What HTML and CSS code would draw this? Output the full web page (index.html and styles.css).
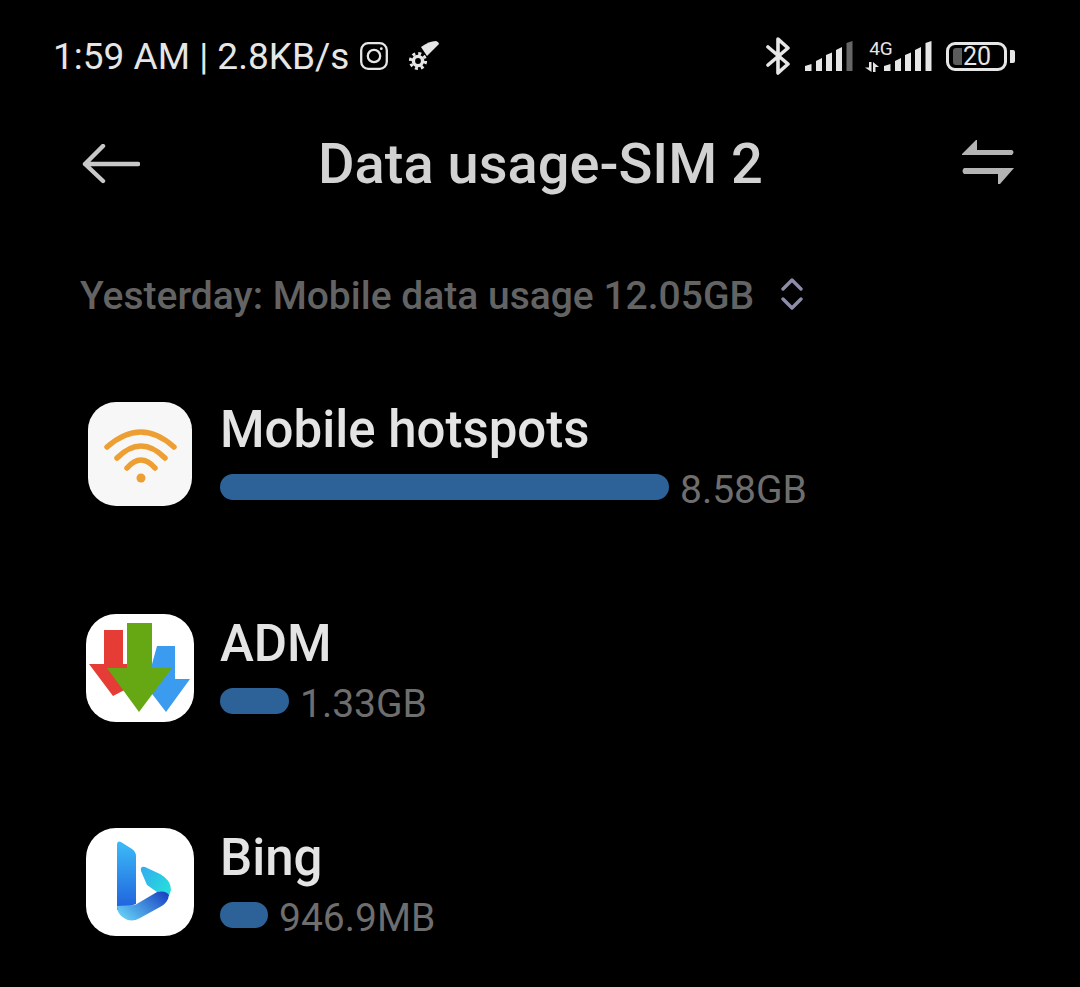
FILE: index.html
```html
<!DOCTYPE html>
<html lang="en">
<head>
  <meta charset="UTF-8">
  <title>Data usage-SIM 2</title>
  <link rel="stylesheet" href="styles.css">
</head>
<body>
  <!-- status bar -->
  <div class="status-bar">
    <div class="status-left">
      <span class="status-text">1:59 AM | 2.8KB/s</span>
      <svg class="ic-insta" viewBox="0 0 28 28" fill="none" stroke="#e6e6e6" stroke-width="2.3">
        <rect x="1.2" y="1.2" width="25.6" height="25.6" rx="7"/>
        <circle cx="14" cy="14" r="6.2"/>
        <circle cx="21.3" cy="6.7" r="1.4" fill="#e6e6e6" stroke="none"/>
      </svg>
      <svg class="ic-gear" viewBox="0 0 32 30">
        <path d="M13 6 Q21 0 28 0 Q31 1 31 3 L19 15 Z" fill="#e6e6e6"/>
        <circle cx="10" cy="20" r="4.6" fill="none" stroke="#e6e6e6" stroke-width="3.4"/>
        <circle cx="10" cy="20" r="7.6" fill="none" stroke="#e6e6e6" stroke-width="3" stroke-dasharray="3 2.97"/>
      </svg>
    </div>
    <div class="status-right">
      <svg class="ic-bt" viewBox="0 0 24 38" fill="none" stroke="#e6e6e6" stroke-width="3.6" stroke-linecap="round" stroke-linejoin="round">
        <path d="M2 10 L22 27 L12 36 V2 L22 11 L2 28"/>
      </svg>
      <svg class="ic-signal" viewBox="0 0 48 30" fill="#e6e6e6">
        <path d="M0 25 L6.500 23 V30 H0 Z"/>
        <path d="M11 20 L17 17 V30 H11 Z"/>
        <path d="M21 14 L27 11.500 V30 H21 Z"/>
        <path d="M31 9 L37 6 V30 H31 Z"/>
        <path d="M41.500 2 L47.500 0 V30 H41.500 Z" fill="#666"/>
      </svg>
      <div class="net">
        <span class="net-label">4G</span>
        <svg class="ic-arrows" viewBox="0 0 14 10" fill="#e6e6e6">
          <path d="M4 0 H6.500 V10 L0 5.500 H4 Z"/>
          <path d="M8 0 L14 5 H10.500 V10 H8 Z"/>
        </svg>
      </div>
      <svg class="ic-signal ic-signal-2" viewBox="0 0 48 30" fill="#e6e6e6">
        <path d="M0 25 L6.500 23 V30 H0 Z"/>
        <path d="M11 20 L17 17 V30 H11 Z"/>
        <path d="M21 14 L27 11.500 V30 H21 Z"/>
        <path d="M31 9 L37 6 V30 H31 Z"/>
        <path d="M41.500 2 L47.500 0 V30 H41.500 Z"/>
      </svg>
      <div class="battery">
        <span class="battery-fill"></span>
        <span class="battery-num">20</span>
      </div>
      <span class="battery-nub"></span>
    </div>
  </div>

  <!-- title bar -->
  <div class="title-bar">
    <svg class="ic-back" viewBox="0 0 58 40" fill="none" stroke="#c8c8c8" stroke-width="4.4" stroke-linecap="round" stroke-linejoin="round">
      <path d="M56 20 H3 M21 2 L3 20 L21 37"/>
    </svg>
    <h1 class="title">Data usage-SIM 2</h1>
    <svg class="ic-switch" viewBox="0 0 54 46" fill="#b4b4b4">
      <path d="M1 15 L15 1 H16 V11 H51 Q54 13 51 16 H1 Z"/>
      <path d="M3 29 H53 L39 45 H37 V35 H3 Q0 32 3 29 Z"/>
    </svg>
  </div>

  <!-- period selector -->
  <div class="period">
    <span>Yesterday: Mobile data usage 12.05GB</span>
    <svg class="ic-updown" viewBox="0 0 22 32" fill="none" stroke="#8c8ca8" stroke-width="3.4" stroke-linecap="round" stroke-linejoin="round">
      <path d="M2 11 L11 2 L20 11 M2 21 L11 30 L20 21"/>
    </svg>
  </div>

  <!-- app list -->
  <div class="app-list">
    <div class="app-row">
      <div class="app-icon">
        <svg class="icon-hotspot" viewBox="0 0 104 104" fill="none" stroke="#ee9f33" stroke-width="5.500" stroke-linecap="round">
          <path d="M19 45 Q53 15 86 45"/>
          <path d="M29 56 Q53 32 77 56"/>
          <path d="M39 66 Q53 50 67 66"/>
          <circle cx="53" cy="76" r="4.500" fill="#ee9f33" stroke="none"/>
        </svg>
      </div>
      <div class="app-info">
        <div class="app-name">Mobile hotspots</div>
        <div class="usage">
          <span class="usage-bar bar-hotspot"></span>
          <span class="usage-value">8.58GB</span>
        </div>
      </div>
    </div>

    <div class="app-row">
      <div class="app-icon">
        <svg class="icon-app" viewBox="0 0 108 108">
          <rect width="108" height="108" rx="30" fill="#fff"/>
          <path d="M18 16 H37 V50 H50 V70 L27 82 L3 50 H18 Z" fill="#e53d36"/>
          <path d="M71 32 H89 V65 H104 L80 98 L60 72 Z" fill="#3a9bef"/>
          <path d="M41 9 H66 V54 H86 L53 98 L21 54 H41 Z" fill="#66a813"/>
        </svg>
      </div>
      <div class="app-info">
        <div class="app-name">ADM</div>
        <div class="usage">
          <span class="usage-bar bar-adm"></span>
          <span class="usage-value">1.33GB</span>
        </div>
      </div>
    </div>

    <div class="app-row">
      <div class="app-icon">
        <svg class="icon-app" viewBox="0 0 108 108">
          <defs>
            <linearGradient id="bingStem" x1="0" y1="0" x2="0" y2="1">
              <stop offset="0" stop-color="#3cbcf8"/>
              <stop offset="1" stop-color="#1f5fdc"/>
            </linearGradient>
            <linearGradient id="bingWing" x1="0" y1="0" x2="1" y2="0.6">
              <stop offset="0" stop-color="#35aaf0"/>
              <stop offset="1" stop-color="#26dcdc"/>
            </linearGradient>
            <linearGradient id="bingBase" x1="0" y1="0.8" x2="1" y2="0.2">
              <stop offset="0" stop-color="#66d2f6"/>
              <stop offset="1" stop-color="#1c47c4"/>
            </linearGradient>
          </defs>
          <rect width="108" height="108" rx="30" fill="#fff"/>
          <path d="M31 17 Q31 12 35 14 L46 21 Q50 24 50 28 V76 L31 82 Z" fill="url(#bingStem)"/>
          <path d="M55 43 Q54 38 59 39 L74 46 Q85 52 85 62 L83 68 L71 64 L61 57 Z" fill="url(#bingWing)"/>
          <path d="M31 78 L49 77 L71 64 Q80 62 83 67 Q82 75 74 79 L54 90 Q45 95 38 90 Q31 86 31 78 Z" fill="url(#bingBase)"/>
        </svg>
      </div>
      <div class="app-info">
        <div class="app-name">Bing</div>
        <div class="usage">
          <span class="usage-bar bar-bing"></span>
          <span class="usage-value">946.9MB</span>
        </div>
      </div>
    </div>
  </div>
</body>
</html>
```

FILE: styles.css
```css
html, body {
  margin: 0;
  padding: 0;
  background: #000;
}

body {
  width: 1080px;
  height: 987px;
  overflow: hidden;
  font-family: Roboto, "Liberation Sans", sans-serif;
}

svg {
  display: block;
  flex: none;
}

/* status bar */
.status-bar {
  display: flex;
  justify-content: space-between;
  align-items: center;
  height: 40px;
  padding: 36px 65px 0 53px;
  color: #e6e6e6;
}

.status-left,
.status-right {
  display: flex;
  align-items: center;
}

.status-text {
  margin-top: 2px;
  font-size: 37px;
  line-height: 40px;
  white-space: nowrap;
}

.ic-insta {
  width: 28px;
  height: 28px;
  margin-left: 11px;
}

.ic-gear {
  width: 32px;
  height: 30px;
  margin-left: 20px;
}

.ic-bt {
  width: 24px;
  height: 38px;
  margin-right: 15px;
}

.ic-signal {
  width: 48px;
  height: 30px;
}

.net {
  display: flex;
  flex-direction: column;
  align-items: center;
  width: 28px;
  margin-left: 12px;
  margin-right: -9px;
}

.net-label {
  font-size: 19px;
  line-height: 18px;
  margin-left: 4px;
  margin-bottom: 4px;
}

.ic-arrows {
  width: 14px;
  height: 10px;
  align-self: flex-start;
}

.ic-signal-2 {
  margin-right: 14px;
}

.battery {
  display: flex;
  align-items: center;
  box-sizing: border-box;
  width: 61px;
  height: 29px;
  padding: 0 4px;
  border: 3px solid #e6e6e6;
  border-radius: 9px;
}

.battery-fill {
  width: 9px;
  height: 17px;
  margin-right: 1px;
  border-radius: 3px 0 0 3px;
  background: #5c5c5c;
}

.battery-num {
  font-size: 25px;
  line-height: 23px;
}

.battery-nub {
  width: 5px;
  height: 13px;
  margin-left: 3px;
  border-radius: 0 2px 2px 0;
  background: #e6e6e6;
}

/* title bar */
.title-bar {
  display: flex;
  justify-content: space-between;
  align-items: center;
  height: 60px;
  margin-top: 58px;
  padding: 0 65px 0 82px;
}

.ic-back {
  width: 58px;
  height: 40px;
}

.title {
  margin: 0 20px 0 0;
  font-size: 56px;
  font-weight: 500;
  line-height: 60px;
  color: #d2d2d2;
  white-space: nowrap;
}

.ic-switch {
  width: 54px;
  height: 46px;
  margin-bottom: 4px;
}

/* period selector */
.period {
  display: flex;
  align-items: center;
  gap: 27px;
  height: 44px;
  margin-top: 80px;
  padding-left: 80px;
  font-size: 39px;
  font-weight: 500;
  color: #636363;
}

.ic-updown {
  width: 22px;
  height: 32px;
  margin-bottom: 4px;
}

/* app list */
.app-list {
  display: flex;
  flex-direction: column;
  gap: 106px;
  margin-top: 82px;
  padding-left: 86px;
}

.app-row {
  display: flex;
  align-items: center;
  gap: 26px;
  height: 108px;
}

.app-icon {
  display: flex;
  align-items: center;
  justify-content: center;
  width: 108px;
  height: 108px;
}

.icon-hotspot {
  width: 104px;
  height: 104px;
  border-radius: 28px;
  background: #f7f7f7;
}

.icon-app {
  width: 108px;
  height: 108px;
}

.app-name {
  padding-top: 1px;
  font-size: 51px;
  font-weight: 500;
  line-height: 56px;
  color: #e4e4e4;
}

.usage {
  display: flex;
  align-items: center;
  gap: 11px;
  height: 40px;
  margin-top: 9px;
}

.usage-bar {
  height: 26px;
  border-radius: 13px;
  background: #2c6298;
}

.bar-hotspot {
  width: 449px;
}

.bar-adm {
  width: 69px;
}

.bar-bing {
  width: 48px;
}

.usage-value {
  margin-top: 5px;
  font-size: 39px;
  color: #6e6e6e;
}
```
